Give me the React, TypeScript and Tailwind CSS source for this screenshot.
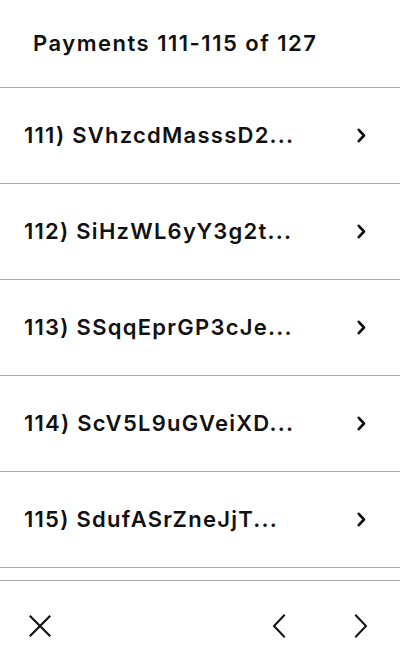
import React from 'react';

const payments = [
  { n: 111, id: 'SVhzcdMasssD2...' },
  { n: 112, id: 'SiHzWL6yY3g2t...' },
  { n: 113, id: 'SSqqEprGP3cJe...' },
  { n: 114, id: 'ScV5L9uGVeiXD...' },
  { n: 115, id: 'SdufASrZneJjT...' },
];

const Chevron: React.FC<{ dir: 'left' | 'right'; className?: string; stroke?: number }> = ({ dir, className, stroke = 2 }) => (
  <svg className={className} viewBox="0 0 14 24" fill="none" stroke="currentColor" strokeWidth={stroke} strokeLinecap="square" strokeLinejoin="miter">
    {dir === 'right' ? <path d="M2 1.5 L12 12 L2 22.5" /> : <path d="M12 1.5 L2 12 L12 22.5" />}
  </svg>
);

export default function App() {
  return (
    <div
      className="w-[400px] h-[672px] bg-white text-[#111] flex flex-col overflow-hidden"
      style={{ fontFamily: 'Inter, "Noto Sans", sans-serif' }}
    >
      {/* Header */}
      <div className="h-[88px] shrink-0 flex items-center px-[33px] border-b border-[#a9a9a9]">
        <h1 className="text-[22px] font-semibold tracking-[1.5px] whitespace-nowrap">Payments 111-115 of 127</h1>
      </div>

      {/* List */}
      <div className="flex-1 overflow-hidden">
        {payments.map((p) => (
          <div key={p.n} className="h-[96px] flex items-center justify-between pl-6 pr-[34px] border-b border-[#a9a9a9]">
            <span className="text-[22px] font-semibold tracking-[1.25px] whitespace-nowrap">
              {p.n}) {p.id}
            </span>
            <svg className="w-[9px] h-[15px]" viewBox="0 0 9 15" fill="none" stroke="currentColor" strokeWidth={2.6} strokeLinecap="round" strokeLinejoin="round">
              <path d="M1.8 1.8 L7 7.5 L1.8 13.2" />
            </svg>
          </div>
        ))}
      </div>

      {/* Footer */}
      <div className="h-[92px] shrink-0 flex items-center border-t border-[#a9a9a9] pb-[2px]">
        <button className="ml-[29px] w-[22px] h-[22px] text-[#111]">
          <svg className="w-[22px] h-[22px]" viewBox="0 0 22 22" fill="none" stroke="currentColor" strokeWidth={2.2} strokeLinecap="square">
            <path d="M1.5 1.5 L20.5 20.5 M20.5 1.5 L1.5 20.5" />
          </svg>
        </button>
        <div className="flex-1" />
        <button className="w-[14px] h-[24px]">
          <Chevron dir="left" className="w-[14px] h-[24px]" />
        </button>
        <button className="ml-[68px] mr-[32px] w-[14px] h-[24px]">
          <Chevron dir="right" className="w-[14px] h-[24px]" />
        </button>
      </div>
    </div>
  );
}
